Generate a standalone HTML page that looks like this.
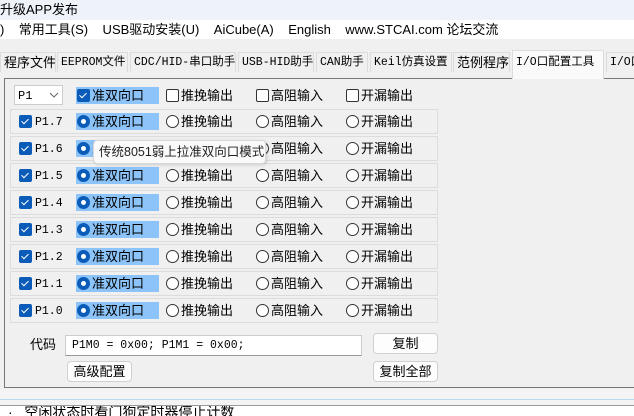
<!DOCTYPE html>
<html><head><meta charset="utf-8"><style>
*{margin:0;padding:0;box-sizing:border-box}
body{width:634px;height:416px;overflow:hidden;background:#f0f0f0;position:relative;font-family:"Liberation Sans","Noto Sans CJK SC",sans-serif;font-size:12px;color:#000}
.a{position:absolute}
.mono{font-family:"Liberation Mono","Noto Sans CJK SC",monospace}
.tab{position:absolute;top:52px;height:20px;background:#f0f0f0;border:1px solid #dcdcdc;border-bottom:none;font-family:"Liberation Mono","Noto Sans CJK SC",monospace;font-size:11.5px;line-height:19px;padding-left:3px;white-space:nowrap;overflow:hidden}
.row{position:absolute;left:10px;width:428px;height:25px;border:1px solid #dcdcdc}
.hl{position:absolute;left:76px;width:83px;height:17px;background:#8cc4fa}
.rad{position:absolute;width:13px;height:13px;border:1px solid #333;border-radius:50%;background:#fff}
.rad.on{background:#fff;border:4px solid #0b5cb8}
.cb{position:absolute;width:13px;height:13px;border:1px solid #333;border-radius:2px;background:#fff}
.cb.on{background:#0b5cb8;border-color:#0b5cb8}
.cb.on:after{content:"";position:absolute;left:3px;top:1px;width:3px;height:6px;border:solid #fff;border-width:0 1.5px 1.5px 0;transform:rotate(45deg)}
.t{position:absolute;font-size:13px;line-height:16px;white-space:nowrap}
.btn{position:absolute;background:#fdfdfd;border:1px solid #d0d0d0;border-radius:4px;font-size:13px;text-align:center;line-height:19px}
</style></head><body>
<div class="a" style="left:0;top:0;width:634px;height:20px;background:#eef2f9"></div>
<div class="t" style="left:0;top:2px">升级APP发布</div>
<div class="a" style="left:0;top:20px;width:634px;height:19px;background:#fff"></div>
<div class="t" style="left:0;top:22px">)&nbsp;&nbsp;&nbsp; 常用工具(S)&nbsp;&nbsp;&nbsp; USB驱动安装(U)&nbsp;&nbsp;&nbsp; AiCube(A)&nbsp;&nbsp;&nbsp; English&nbsp;&nbsp;&nbsp; www.STCAI.com 论坛交流</div>

<div class="tab" style="left:0;width:56px;font-family:'Liberation Sans','Noto Sans CJK SC',sans-serif;font-size:13px">程序文件</div>
<div class="tab" style="left:57px;width:71px">EEPROM文件</div>
<div class="tab" style="left:130px;width:106px">CDC/HID-串口助手</div>
<div class="tab" style="left:238px;width:76px">USB-HID助手</div>
<div class="tab" style="left:316px;width:52px">CAN助手</div>
<div class="tab" style="left:370px;width:82px">Keil仿真设置</div>
<div class="tab" style="left:453px;width:57px;font-family:'Liberation Sans','Noto Sans CJK SC',sans-serif;font-size:13px">范例程序</div>
<div class="tab" style="left:512px;top:50px;height:29px;width:92px;background:#fafafa;z-index:2;padding-top:2px">I/O口配置工具</div>
<div class="tab" style="left:606px;width:30px">I/O口</div>

<div class="a" style="left:4px;top:78px;width:640px;height:310px;border:1px solid #777;border-right:none;background:#f0f0f0"></div>

<div class="a" style="left:14px;top:85px;width:49px;height:20px;background:#fff;border:1px solid #ccc"></div>
<div class="t mono" style="left:18px;top:88px;font-size:12px">P1</div>
<svg class="a" style="left:49px;top:92px" width="10" height="6"><path d="M1 1L5 5L9 1" fill="none" stroke="#666" stroke-width="1"/></svg>
<div class="hl" style="top:87px"></div>
<div class="cb on" style="left:77px;top:89px"></div>
<div class="t" style="left:92px;top:88px">准双向口</div>
<div class="cb" style="left:166px;top:89px"></div><div class="t" style="left:181px;top:88px">推挽输出</div>
<div class="cb" style="left:256px;top:89px"></div><div class="t" style="left:271px;top:88px">高阻输入</div>
<div class="cb" style="left:346px;top:89px"></div><div class="t" style="left:361px;top:88px">开漏输出</div>

<div id="rows"></div>
<script>
var names=["P1.7","P1.6","P1.5","P1.4","P1.3","P1.2","P1.1","P1.0"],h="";
for(var i=0;i<8;i++){var y=109+i*27,c=y+13;
h+='<div class="row" style="top:'+y+'px"></div>'+
'<div class="cb on" style="left:19px;top:'+(c-7)+'px"></div>'+
'<div class="t mono" style="left:35px;top:'+(c-7)+'px;font-size:11.5px">'+names[i]+'</div>'+
'<div class="hl" style="top:'+(c-9)+'px"></div>'+
'<div class="rad on" style="left:77px;top:'+(c-7)+'px"></div>'+
'<div class="t" style="left:92px;top:'+(c-8)+'px">准双向口</div>'+
'<div class="rad" style="left:166px;top:'+(c-7)+'px"></div><div class="t" style="left:181px;top:'+(c-8)+'px">推挽输出</div>'+
'<div class="rad" style="left:256px;top:'+(c-7)+'px"></div><div class="t" style="left:271px;top:'+(c-8)+'px">高阻输入</div>'+
'<div class="rad" style="left:346px;top:'+(c-7)+'px"></div><div class="t" style="left:361px;top:'+(c-8)+'px">开漏输出</div>';}
document.getElementById("rows").innerHTML=h;
</script>

<div class="a" style="left:93px;top:140px;width:173px;height:24px;background:#fafafa;border:1px solid #d8d8d8;border-radius:4px;box-shadow:1px 1px 3px rgba(0,0,0,.15);z-index:5"></div>
<div class="t" style="left:99px;top:144px;z-index:6;color:#222;font-size:12.5px">传统8051弱上拉准双向口模式</div>

<div class="t" style="left:30px;top:337px">代码</div>
<div class="a" style="left:65px;top:335px;width:297px;height:21px;background:#fff;border:1px solid #ccc;border-bottom-color:#999"></div>
<div class="t mono" style="left:72px;top:338px;font-size:11.5px">P1M0 = 0x00; P1M1 = 0x00;</div>
<div class="btn" style="left:373px;top:333px;width:65px;height:21px">复制</div>
<div class="btn" style="left:67px;top:361px;width:65px;height:21px">高级配置</div>
<div class="btn" style="left:373px;top:361px;width:65px;height:21px">复制全部</div>

<div class="a" style="left:0;top:389px;width:634px;height:16px;background:#f4f4f4"></div>
<div class="a" style="left:0;top:399px;width:634px;height:1px;background:#b5dcef"></div>
<div class="a" style="left:0;top:405px;width:634px;height:11px;background:#fff;border-top:1px solid #999;overflow:hidden">
<div class="t" style="left:8px;top:-2px;font-size:14px">·&nbsp;&nbsp; 空闲状态时看门狗定时器停止计数</div></div>
</body></html>
